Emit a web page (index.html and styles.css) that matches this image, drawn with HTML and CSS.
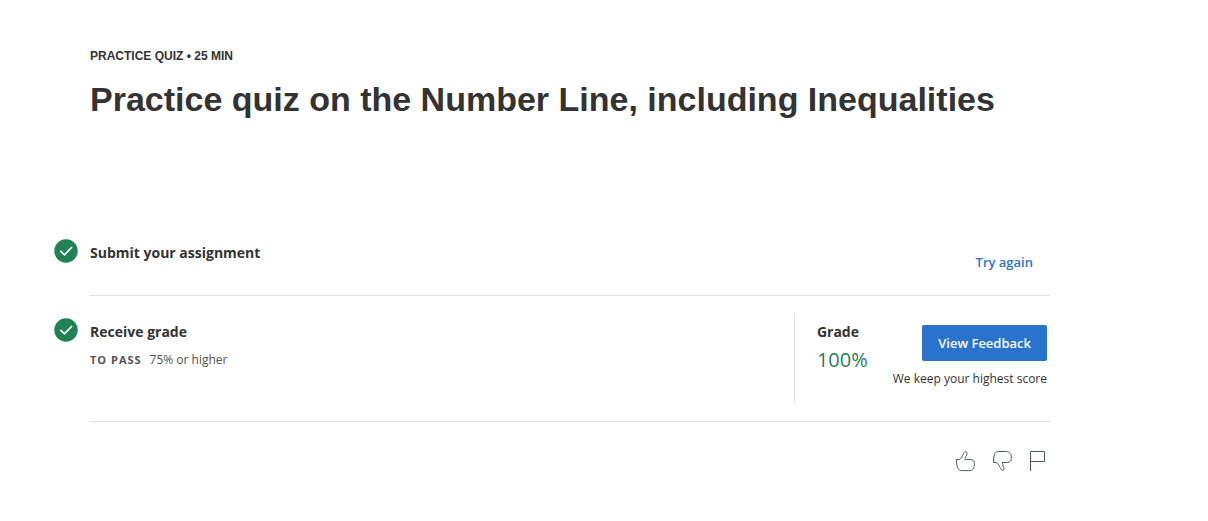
FILE: index.html
```html
<!DOCTYPE html>
<html lang="en">
<head>
<meta charset="utf-8">
<meta name="viewport" content="width=device-width, initial-scale=1">
<title>Practice quiz on the Number Line, including Inequalities</title>
<link rel="stylesheet" href="styles.css">
</head>
<body>
<main class="page">
  <header class="heading">
    <p class="eyebrow">PRACTICE QUIZ • 25 MIN</p>
    <h1 class="title">Practice quiz on the Number Line, including Inequalities</h1>
  </header>

  <section class="step">
    <svg class="check" viewBox="0 0 24 24" aria-hidden="true"><circle cx="12" cy="12" r="11.7" fill="#1f8354"/><path d="M6.3 11.8l4.2 4 7.5-7.8" fill="none" stroke="#fff" stroke-width="1.8"/></svg>
    <div class="step-body step-submit">
      <h2 class="label">Submit your assignment</h2>
      <a class="try-again" href="#">Try again</a>
    </div>
  </section>

  <section class="step">
    <svg class="check check-grade" viewBox="0 0 24 24" aria-hidden="true"><circle cx="12" cy="12" r="11.7" fill="#1f8354"/><path d="M6.3 11.8l4.2 4 7.5-7.8" fill="none" stroke="#fff" stroke-width="1.8"/></svg>
    <div class="step-body step-grade">
      <div class="receive">
        <h2 class="label">Receive grade</h2>
        <p class="pass"><strong class="pass-name">TO PASS</strong><span>75% or higher</span></p>
      </div>
      <div class="result">
        <div class="grade">
          <h2 class="label">Grade</h2>
          <p class="score">100%</p>
        </div>
        <div class="feedback">
          <button class="button" type="button">View Feedback</button>
          <p class="note">We keep your highest score</p>
        </div>
      </div>
    </div>
  </section>

  <footer class="actions">
    <button class="icon-button" type="button" aria-label="Like"><svg class="icon" viewBox="0 0 24 24"><path d="M4.5 9.5H7.5C8.3 9.5 11 5 12.2 2.4C12.7 1.4 14.4 1.3 14.9 2.3C15.4 3.4 14.9 4.4 14.2 5.8C13.4 7.3 13 8.4 13.2 9.5H18.5C21 9.5 22.4 11 22.4 13.5C22.4 18 21 20.6 17.5 20.6H9.3C7 20.6 5.5 18.6 5 15.8C4.7 14 4.5 11.8 4.5 9.5Z"/></svg></button>
    <button class="icon-button" type="button" aria-label="Dislike"><svg class="icon" viewBox="0 0 24 24"><path d="M5.5 12.5H8.5C9.4 12.5 12 17 13.2 19.6C13.7 20.6 15.4 20.7 15.9 19.7C16.4 18.6 15.6 17.6 15.2 16.2C14.8 14.7 14.5 13.6 14.2 12.5H19.3C21.8 12.5 23.4 11 23.4 8.5C23.4 4 21.8 1.5 18.5 1.5H10.3C8 1.5 6.5 3.4 6 6.2C5.7 8 5.5 10.2 5.5 12.5Z"/></svg></button>
    <button class="icon-button" type="button" aria-label="Report an issue"><svg class="icon" viewBox="0 0 24 24"><path d="M6.5 21V1.5H20.5V11.5H6.5"/></svg></button>
  </footer>
</main>
</body>
</html>
```
FILE: styles.css
```css
* { box-sizing: border-box; }

body {
  margin: 0;
  background: #fff;
  color: #333;
  font-family: "Open Sans", sans-serif;
  font-size: 14px;
  line-height: 20px;
}

h1, h2, p { margin: 0; }

.page {
  max-width: 1050px;
  padding: 46px 0 24px 54px;
}

.heading {
  padding: 0 0 117px 36px;
  font-family: "Liberation Sans", Arial, sans-serif;
}

.eyebrow {
  font-size: 12px;
  font-weight: 700;
}

.title {
  margin-top: 10px;
  font-size: 34px;
  line-height: 46px;
}

.step {
  display: flex;
  gap: 12px;
}

.check {
  flex: none;
  width: 24px;
  height: 24px;
}

.check-grade { margin-top: 22px; }

.step-body {
  flex: 1;
  display: flex;
  justify-content: space-between;
  border-bottom: 1px solid #e1e1e1;
}

.step-submit {
  padding: 4px 17px 23px 0;
}

.label {
  font-size: 14px;
  font-weight: 700;
}

.try-again {
  margin-top: 9px;
  color: #2a73cc;
  font-size: 13px;
  font-weight: 600;
  line-height: 20px;
  text-decoration: none;
}

.step-grade { padding: 17px 0 18px; }

.receive { padding-top: 9px; }

.pass {
  display: flex;
  gap: 8px;
  margin-top: 8px;
  color: #525252;
  font-size: 12px;
}

.pass-name {
  font-size: 11px;
  font-weight: 700;
  letter-spacing: 1px;
}

.result {
  display: flex;
  gap: 25px;
  padding: 9px 3px 14px 22px;
  border-left: 1px solid #e1e1e1;
}

.score {
  margin-top: 4px;
  color: #1f8354;
  font-size: 20px;
  line-height: 28px;
}

.feedback {
  display: flex;
  flex-direction: column;
  align-items: flex-end;
  padding-top: 3px;
}

.button {
  height: 36px;
  padding: 0 16px;
  border: 0;
  border-radius: 2px;
  background: #2a73cc;
  color: #fff;
  font: 600 13px/20px "Open Sans", sans-serif;
}

.note {
  margin-top: 8px;
  font-size: 12px;
}

.actions {
  display: flex;
  justify-content: flex-end;
  gap: 12px;
  padding: 28px 2px 0 0;
}

.icon-button {
  display: flex;
  padding: 0;
  border: 0;
  background: none;
}

.icon {
  width: 24px;
  height: 24px;
  fill: none;
  stroke: #525761;
  stroke-width: 1;
}
```
